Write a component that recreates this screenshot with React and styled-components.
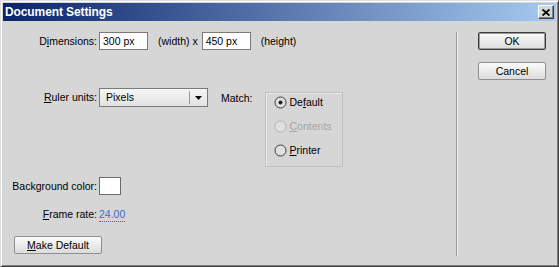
import React from "react";
import styled, { createGlobalStyle } from "styled-components";

const GlobalStyle = createGlobalStyle`
  html, body {
    margin: 0;
    padding: 0;
    background: #d6d6d6;
  }
  body {
    font-family: "Liberation Sans", Tahoma, Arial, sans-serif;
    font-size: 10.5px;
    color: #000;
  }
`;

const Window = styled.div`
  width: 559px;
  height: 267px;
  box-sizing: border-box;
  display: flex;
  flex-direction: column;
  background: #d6d6d6;
  border: 1px solid;
  border-color: #dedede #404040 #404040 #dedede;
  box-shadow: inset 1px 1px 0 #ffffff, inset -1px -1px 0 #808080;
  padding: 2px;
`;

const TitleBar = styled.div`
  height: 18px;
  flex-shrink: 0;
  display: flex;
  align-items: center;
  justify-content: space-between;
  padding: 0 2px 0 2px;
  background: linear-gradient(to right, #0a246a, #a6caf0);
`;

const Title = styled.span`
  color: #fff;
  font-weight: bold;
  font-size: 12px;
  letter-spacing: -0.1px;
`;

const CloseButton = styled.div`
  width: 16px;
  height: 14px;
  box-sizing: border-box;
  display: flex;
  align-items: center;
  justify-content: center;
  background: #d6d6d6;
  border: 1px solid;
  border-color: #ffffff #404040 #404040 #ffffff;
  box-shadow: inset -1px -1px 0 #808080;
`;

const Body = styled.div`
  flex: 1;
  display: flex;
`;

const LeftPanel = styled.div`
  width: 453px;
  box-sizing: border-box;
  padding: 11px 0 0 7px;
  display: flex;
  flex-direction: column;
`;

const Separator = styled.div`
  width: 1px;
  margin: 11px 0 8px;
  background: #9a9a9a;
  border-right: 1px solid #f4f4f4;
`;

const RightPanel = styled.div`
  padding: 11px 0 0 20px;
  display: flex;
  flex-direction: column;
  gap: 12px;
`;

const Row = styled.div`
  display: flex;
  align-items: ${(p) => (p.$top ? "flex-start" : "center")};
  margin-top: ${(p) => p.$mt || 0}px;
  min-height: ${(p) => p.$h || 16}px;
`;

const Label = styled.span`
  width: 87px;
  margin-right: 2px;
  text-align: right;
  white-space: nowrap;
  line-height: ${(p) => p.$lh || 16}px;
  flex-shrink: 0;
`;

const Text = styled.span`
  white-space: nowrap;
  margin-left: ${(p) => p.$ml || 0}px;
  line-height: ${(p) => p.$lh || 16}px;
`;

const U = styled.span`
  text-decoration: underline;
`;

const TextBox = styled.div`
  width: 49px;
  height: 18px;
  box-sizing: border-box;
  margin-left: ${(p) => p.$ml || 0}px;
  padding: 1px 0 0 3px;
  line-height: 15px;
  background: #fff;
  border: 1px solid #7a7a7a;
`;

const Select = styled.div`
  width: 109px;
  height: 19px;
  box-sizing: border-box;
  display: flex;
  align-items: stretch;
  background: linear-gradient(#f6f6f6, #e2e2e2);
  border: 1px solid #7a7a7a;
`;

const SelectValue = styled.span`
  flex: 1;
  padding-left: 6px;
  line-height: 17px;
`;

const SelectArrow = styled.div`
  width: 17px;
  display: flex;
  align-items: center;
  justify-content: center;
  border-left: 1px solid #9a9a9a;
  margin: 2px 0;
`;

const GroupBox = styled.div`
  width: 78px;
  height: 75px;
  box-sizing: border-box;
  margin: 4px 0 0 12px;
  padding: 0 0 0 8px;
  border: 1px solid #c0c0c0;
  box-shadow: inset 1px 1px 0 #ececec;
  display: flex;
  flex-direction: column;
  gap: 6px;
`;

const Radio = styled.div`
  display: flex;
  align-items: center;
  height: 18px;
  gap: 3px;
  color: ${(p) => (p.$disabled ? "#a4a4a4" : "#000")};
`;

const Swatch = styled.div`
  width: 20px;
  height: 16px;
  background: #fff;
  border: 1px solid #6a6a6a;
`;

const RateValue = styled.span`
  color: #3a6cc8;
  line-height: 14px;
  border-bottom: 1px dotted #3a6cc8;
`;

const Button = styled.button`
  width: ${(p) => p.$w || 68}px;
  height: 18px;
  padding: 0;
  margin-left: ${(p) => p.$ml || 0}px;
  font-family: inherit;
  font-size: 10.5px;
  color: #000;
  border-radius: 2px;
  border: 1px solid ${(p) => (p.$default ? "#3c3c3c" : "#909090")};
  background: linear-gradient(#fbfbfb, #dcdcdc);
  box-shadow: ${(p) => (p.$default ? "inset 0 0 0 1px #9a9a9a" : "none")};
`;

function RadioMark({ checked, disabled }) {
  const stroke = disabled ? "#b4b4b4" : "#3a3a3a";
  return (
    <svg width="13" height="13" viewBox="0 0 13 13">
      <circle cx="6.5" cy="6.5" r="5.5" fill="#e0e0e0" stroke={stroke} strokeWidth="1" />
      {checked && <circle cx="6.5" cy="6.5" r="2" fill="#222" />}
    </svg>
  );
}

export default function App() {
  return (
    <>
      <GlobalStyle />
      <Window>
        <TitleBar>
          <Title>Document Settings</Title>
          <CloseButton>
            <svg width="8" height="7" viewBox="0 0 8 7">
              <path d="M0.5 0.5 L7.5 6.5 M7.5 0.5 L0.5 6.5" stroke="#000" strokeWidth="1.8" />
            </svg>
          </CloseButton>
        </TitleBar>
        <Body>
          <LeftPanel>
            <Row $h={18}>
              <Label>
                D<U>i</U>mensions:
              </Label>
              <TextBox>300 px</TextBox>
              <Text $ml={10}>(width) x</Text>
              <TextBox $ml={4}>450 px</TextBox>
              <Text $ml={10}>(height)</Text>
            </Row>
            <Row $top $mt={38}>
              <Label $lh={19}>
                <U>R</U>uler units:
              </Label>
              <Select>
                <SelectValue>Pixels</SelectValue>
                <SelectArrow>
                  <svg width="7" height="4" viewBox="0 0 7 4">
                    <path d="M0 0 L7 0 L3.5 4 Z" fill="#000" />
                  </svg>
                </SelectArrow>
              </Select>
              <Text $ml={13} $lh={21}>Match:</Text>
              <GroupBox>
                <Radio>
                  <RadioMark checked />
                  <span>
                    De<U>f</U>ault
                  </span>
                </Radio>
                <Radio $disabled>
                  <RadioMark disabled />
                  <span>
                    <U>C</U>ontents
                  </span>
                </Radio>
                <Radio>
                  <RadioMark />
                  <span>
                    <U>P</U>rinter
                  </span>
                </Radio>
              </GroupBox>
            </Row>
            <Row $mt={10} $h={16}>
              <Label>Background color:</Label>
              <Swatch />
            </Row>
            <Row $mt={11} $h={16}>
              <Label>
                <U>F</U>rame rate:
              </Label>
              <RateValue>24.00</RateValue>
            </Row>
            <Row $mt={14} $h={18}>
              <Button $w={88} $ml={4}>
                <U>M</U>ake Default
              </Button>
            </Row>
          </LeftPanel>
          <Separator />
          <RightPanel>
            <Button $default>OK</Button>
            <Button>Cancel</Button>
          </RightPanel>
        </Body>
      </Window>
    </>
  );
}
